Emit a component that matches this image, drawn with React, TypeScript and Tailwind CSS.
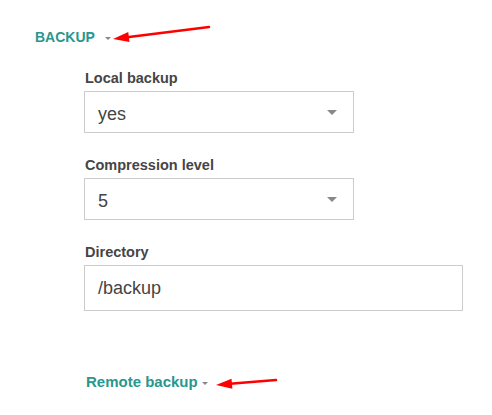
import React from 'react';

const Caret = ({ className }: { className: string }) => (
	<span className={`inline-block border-x-transparent border-t-[#888] border-b-0 border-solid ${className}`} />
);

const Arrow = ({ x1, y1, x2, y2 }: { x1: number; y1: number; x2: number; y2: number }) => {
	// x1,y1 = tail, x2,y2 = tip
	const dx = x2 - x1;
	const dy = y2 - y1;
	const len = Math.sqrt(dx * dx + dy * dy);
	const ux = dx / len;
	const uy = dy / len;
	const hl = 16;
	const hw = 5;
	const bx = x2 - ux * hl;
	const by = y2 - uy * hl;
	const p1 = `${bx - uy * hw},${by + ux * hw}`;
	const p2 = `${bx + uy * hw},${by - ux * hw}`;
	return (
		<g>
			<line x1={x1} y1={y1} x2={bx + ux * 2} y2={by + uy * 2} stroke="#f00" strokeWidth={2.5} strokeLinecap="round" />
			<polygon points={`${x2},${y2} ${p1} ${p2}`} fill="#f00" />
		</g>
	);
};

const SelectField = ({ label, value }: { label: string; value: string }) => (
	<div className="mb-[24px]">
		<div className="text-[14.5px] leading-[16px] font-bold text-[#454545] mb-[5px] pl-px">{label}</div>
		<div className="w-[270px] h-[42px] border border-[#ccc] flex items-center justify-between pl-[13px] pr-[16px]">
			<span className="text-[18px] text-[#444] mt-[5px]">{value}</span>
			<Caret className="border-x-[5px] border-t-[5px]" />
		</div>
	</div>
);

const App: React.FC = () => {
	return (
		<div className="relative w-[492px] h-[415px] bg-white overflow-hidden font-[family-name:'Liberation_Sans',Arial,sans-serif]">
			<div className="pt-[29px] pl-[35px] flex items-center">
				<span className="text-[14px] leading-[16px] font-bold text-[#2a968e]">BACKUP</span>
				<Caret className="ml-[10px] mt-[2px] border-x-[3px] border-t-[3px]" />
			</div>

			<div className="pl-[84px] pt-[25px]">
				<SelectField label="Local backup" value="yes" />
				<SelectField label="Compression level" value="5" />
				<div>
					<div className="text-[14.5px] leading-[16px] font-bold text-[#454545] mb-[5px] pl-px">Directory</div>
					<div className="w-[379px] h-[46px] border border-[#ccc] flex items-center pl-[13px]">
						<span className="text-[18px] text-[#444]">/backup</span>
					</div>
				</div>
			</div>

			<div className="pl-[86px] pt-[63px] flex items-center">
				<span className="text-[15px] leading-[16px] font-bold text-[#2a968e]">Remote backup</span>
				<Caret className="ml-[4px] mt-[2px] border-x-[3px] border-t-[3px]" />
			</div>

			<svg className="absolute left-0 top-0 pointer-events-none" width={492} height={415}>
				<Arrow x1={209} y1={27} x2={113} y2={39} />
				<Arrow x1={276} y1={380} x2={216} y2={385} />
			</svg>
		</div>
	);
};

export default App;
